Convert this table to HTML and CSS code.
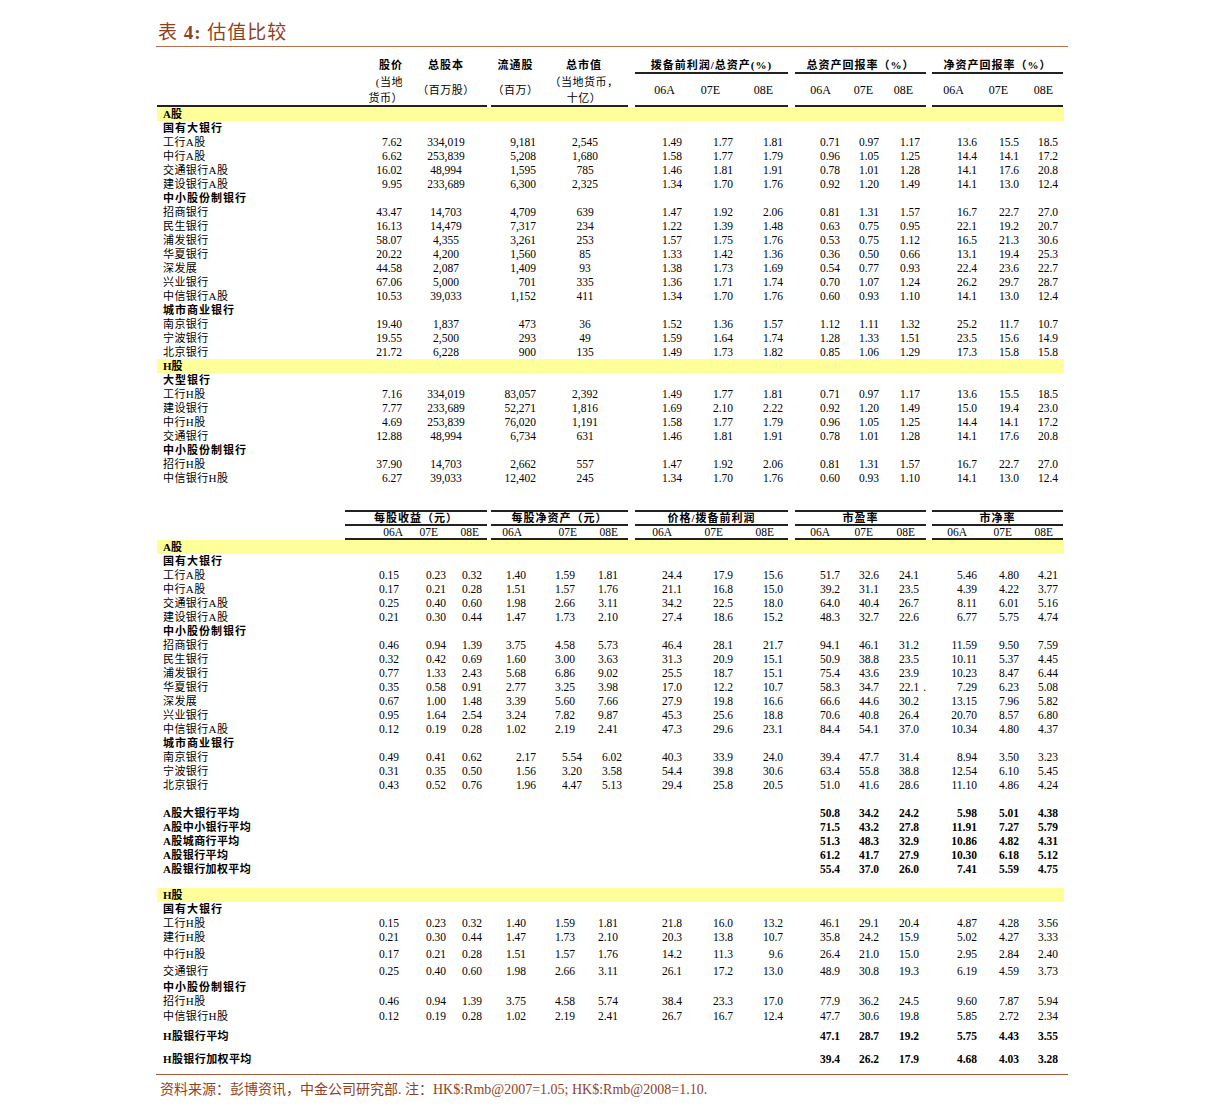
FILE: index.html
```html
<!DOCTYPE html>
<html lang="zh">
<head>
<meta charset="utf-8">
<title>表 4: 估值比较</title>
<link rel="stylesheet" href="styles.css">
</head>
<body>
<div class="page">
  <div class="title">表 <b>4:</b> 估值比较</div>
  <div class="tbl">
    <div class="hd1">
      <div class="seg s1 seg1a">
        <div class="hc hr">
          <div class="hl">股价</div>
          <div class="hs first">(当地</div>
          <div class="hs">货币）</div>
        </div>
        <div class="hc">
          <div class="hl">总股本</div>
          <div class="hm">（百万股）</div>
        </div>
      </div>
      <div class="seg s2 seg1b">
        <div class="hc">
          <div class="hl">流通股</div>
          <div class="hm">（百万）</div>
        </div>
        <div class="hc">
          <div class="hl">总市值</div>
          <div class="hs first">（当地货币，</div>
          <div class="hs">十亿）</div>
        </div>
      </div>
      <div class="seg s3">
        <div class="gt">拨备前利润/总资产(%)</div>
        <div class="sub p3"><span>06A</span><span>07E</span><span>08E</span></div>
      </div>
      <div class="seg s4">
        <div class="gt">总资产回报率（%）</div>
        <div class="sub p4"><span>06A</span><span>07E</span><span>08E</span></div>
      </div>
      <div class="seg s5">
        <div class="gt">净资产回报率（%）</div>
        <div class="sub p5"><span>06A</span><span>07E</span><span>08E</span></div>
      </div>
    </div>

    <div class="row band">A股</div>
    <div class="row grp">国有大银行</div>
    <div class="row t1"><span class="lb">工行A股</span><span>7.62</span><span>334,019</span><span>9,181</span><span>2,545</span><span>1.49</span><span>1.77</span><span>1.81</span><span>0.71</span><span>0.97</span><span>1.17</span><span>13.6</span><span>15.5</span><span>18.5</span></div>
    <div class="row t1"><span class="lb">中行A股</span><span>6.62</span><span>253,839</span><span>5,208</span><span>1,680</span><span>1.58</span><span>1.77</span><span>1.79</span><span>0.96</span><span>1.05</span><span>1.25</span><span>14.4</span><span>14.1</span><span>17.2</span></div>
    <div class="row t1"><span class="lb">交通银行A股</span><span>16.02</span><span>48,994</span><span>1,595</span><span>785</span><span>1.46</span><span>1.81</span><span>1.91</span><span>0.78</span><span>1.01</span><span>1.28</span><span>14.1</span><span>17.6</span><span>20.8</span></div>
    <div class="row t1"><span class="lb">建设银行A股</span><span>9.95</span><span>233,689</span><span>6,300</span><span>2,325</span><span>1.34</span><span>1.70</span><span>1.76</span><span>0.92</span><span>1.20</span><span>1.49</span><span>14.1</span><span>13.0</span><span>12.4</span></div>
    <div class="row grp">中小股份制银行</div>
    <div class="row t1"><span class="lb">招商银行</span><span>43.47</span><span>14,703</span><span>4,709</span><span>639</span><span>1.47</span><span>1.92</span><span>2.06</span><span>0.81</span><span>1.31</span><span>1.57</span><span>16.7</span><span>22.7</span><span>27.0</span></div>
    <div class="row t1"><span class="lb">民生银行</span><span>16.13</span><span>14,479</span><span>7,317</span><span>234</span><span>1.22</span><span>1.39</span><span>1.48</span><span>0.63</span><span>0.75</span><span>0.95</span><span>22.1</span><span>19.2</span><span>20.7</span></div>
    <div class="row t1"><span class="lb">浦发银行</span><span>58.07</span><span>4,355</span><span>3,261</span><span>253</span><span>1.57</span><span>1.75</span><span>1.76</span><span>0.53</span><span>0.75</span><span>1.12</span><span>16.5</span><span>21.3</span><span>30.6</span></div>
    <div class="row t1"><span class="lb">华夏银行</span><span>20.22</span><span>4,200</span><span>1,560</span><span>85</span><span>1.33</span><span>1.42</span><span>1.36</span><span>0.36</span><span>0.50</span><span>0.66</span><span>13.1</span><span>19.4</span><span>25.3</span></div>
    <div class="row t1"><span class="lb">深发展</span><span>44.58</span><span>2,087</span><span>1,409</span><span>93</span><span>1.38</span><span>1.73</span><span>1.69</span><span>0.54</span><span>0.77</span><span>0.93</span><span>22.4</span><span>23.6</span><span>22.7</span></div>
    <div class="row t1"><span class="lb">兴业银行</span><span>67.06</span><span>5,000</span><span>701</span><span>335</span><span>1.36</span><span>1.71</span><span>1.74</span><span>0.70</span><span>1.07</span><span>1.24</span><span>26.2</span><span>29.7</span><span>28.7</span></div>
    <div class="row t1"><span class="lb">中信银行A股</span><span>10.53</span><span>39,033</span><span>1,152</span><span>411</span><span>1.34</span><span>1.70</span><span>1.76</span><span>0.60</span><span>0.93</span><span>1.10</span><span>14.1</span><span>13.0</span><span>12.4</span></div>
    <div class="row grp">城市商业银行</div>
    <div class="row t1"><span class="lb">南京银行</span><span>19.40</span><span>1,837</span><span>473</span><span>36</span><span>1.52</span><span>1.36</span><span>1.57</span><span>1.12</span><span>1.11</span><span>1.32</span><span>25.2</span><span>11.7</span><span>10.7</span></div>
    <div class="row t1"><span class="lb">宁波银行</span><span>19.55</span><span>2,500</span><span>293</span><span>49</span><span>1.59</span><span>1.64</span><span>1.74</span><span>1.28</span><span>1.33</span><span>1.51</span><span>23.5</span><span>15.6</span><span>14.9</span></div>
    <div class="row t1"><span class="lb">北京银行</span><span>21.72</span><span>6,228</span><span>900</span><span>135</span><span>1.49</span><span>1.73</span><span>1.82</span><span>0.85</span><span>1.06</span><span>1.29</span><span>17.3</span><span>15.8</span><span>15.8</span></div>
    <div class="row band">H股</div>
    <div class="row grp">大型银行</div>
    <div class="row t1"><span class="lb">工行H股</span><span>7.16</span><span>334,019</span><span>83,057</span><span>2,392</span><span>1.49</span><span>1.77</span><span>1.81</span><span>0.71</span><span>0.97</span><span>1.17</span><span>13.6</span><span>15.5</span><span>18.5</span></div>
    <div class="row t1"><span class="lb">建设银行</span><span>7.77</span><span>233,689</span><span>52,271</span><span>1,816</span><span>1.69</span><span>2.10</span><span>2.22</span><span>0.92</span><span>1.20</span><span>1.49</span><span>15.0</span><span>19.4</span><span>23.0</span></div>
    <div class="row t1"><span class="lb">中行H股</span><span>4.69</span><span>253,839</span><span>76,020</span><span>1,191</span><span>1.58</span><span>1.77</span><span>1.79</span><span>0.96</span><span>1.05</span><span>1.25</span><span>14.4</span><span>14.1</span><span>17.2</span></div>
    <div class="row t1"><span class="lb">交通银行</span><span>12.88</span><span>48,994</span><span>6,734</span><span>631</span><span>1.46</span><span>1.81</span><span>1.91</span><span>0.78</span><span>1.01</span><span>1.28</span><span>14.1</span><span>17.6</span><span>20.8</span></div>
    <div class="row grp">中小股份制银行</div>
    <div class="row t1"><span class="lb">招行H股</span><span>37.90</span><span>14,703</span><span>2,662</span><span>557</span><span>1.47</span><span>1.92</span><span>2.06</span><span>0.81</span><span>1.31</span><span>1.57</span><span>16.7</span><span>22.7</span><span>27.0</span></div>
    <div class="row t1"><span class="lb">中信银行H股</span><span>6.27</span><span>39,033</span><span>12,402</span><span>245</span><span>1.34</span><span>1.70</span><span>1.76</span><span>0.60</span><span>0.93</span><span>1.10</span><span>14.1</span><span>13.0</span><span>12.4</span></div>

    <div class="hd2">
      <div class="seg2 c2">
        <div class="gt2">每股收益（元）</div>
        <div class="sub q1"><span>06A</span><span>07E</span><span>08E</span></div>
      </div>
      <div class="seg2 c4">
        <div class="gt2">每股净资产（元）</div>
        <div class="sub q2"><span>06A</span><span>07E</span><span>08E</span></div>
      </div>
      <div class="seg2 c6">
        <div class="gt2">价格/拨备前利润</div>
        <div class="sub q3"><span>06A</span><span>07E</span><span>08E</span></div>
      </div>
      <div class="seg2 c8">
        <div class="gt2">市盈率</div>
        <div class="sub q4"><span>06A</span><span>07E</span><span>08E</span></div>
      </div>
      <div class="seg2 c10">
        <div class="gt2">市净率</div>
        <div class="sub q5"><span>06A</span><span>07E</span><span>08E</span></div>
      </div>
    </div>

    <div class="row band">A股</div>
    <div class="row grp">国有大银行</div>
    <div class="row t2"><span class="lb">工行A股</span><span>0.15</span><span>0.23</span><span>0.32</span><span>1.40</span><span>1.59</span><span>1.81</span><span>24.4</span><span>17.9</span><span>15.6</span><span>51.7</span><span>32.6</span><span>24.1</span><span>5.46</span><span>4.80</span><span>4.21</span></div>
    <div class="row t2"><span class="lb">中行A股</span><span>0.17</span><span>0.21</span><span>0.28</span><span>1.51</span><span>1.57</span><span>1.76</span><span>21.1</span><span>16.8</span><span>15.0</span><span>39.2</span><span>31.1</span><span>23.5</span><span>4.39</span><span>4.22</span><span>3.77</span></div>
    <div class="row t2"><span class="lb">交通银行A股</span><span>0.25</span><span>0.40</span><span>0.60</span><span>1.98</span><span>2.66</span><span>3.11</span><span>34.2</span><span>22.5</span><span>18.0</span><span>64.0</span><span>40.4</span><span>26.7</span><span>8.11</span><span>6.01</span><span>5.16</span></div>
    <div class="row t2"><span class="lb">建设银行A股</span><span>0.21</span><span>0.30</span><span>0.44</span><span>1.47</span><span>1.73</span><span>2.10</span><span>27.4</span><span>18.6</span><span>15.2</span><span>48.3</span><span>32.7</span><span>22.6</span><span>6.77</span><span>5.75</span><span>4.74</span></div>
    <div class="row grp">中小股份制银行</div>
    <div class="row t2"><span class="lb">招商银行</span><span>0.46</span><span>0.94</span><span>1.39</span><span>3.75</span><span>4.58</span><span>5.73</span><span>46.4</span><span>28.1</span><span>21.7</span><span>94.1</span><span>46.1</span><span>31.2</span><span>11.59</span><span>9.50</span><span>7.59</span></div>
    <div class="row t2"><span class="lb">民生银行</span><span>0.32</span><span>0.42</span><span>0.69</span><span>1.60</span><span>3.00</span><span>3.63</span><span>31.3</span><span>20.9</span><span>15.1</span><span>50.9</span><span>38.8</span><span>23.5</span><span>10.11</span><span>5.37</span><span>4.45</span></div>
    <div class="row t2"><span class="lb">浦发银行</span><span>0.77</span><span>1.33</span><span>2.43</span><span>5.68</span><span>6.86</span><span>9.02</span><span>25.5</span><span>18.7</span><span>15.1</span><span>75.4</span><span>43.6</span><span>23.9</span><span>10.23</span><span>8.47</span><span>6.44</span></div>
    <div class="row t2"><span class="lb">华夏银行</span><span>0.35</span><span>0.58</span><span>0.91</span><span>2.77</span><span>3.25</span><span>3.98</span><span>17.0</span><span>12.2</span><span>10.7</span><span>58.3</span><span>34.7</span><span>22.1<span class="dot">.</span></span><span>7.29</span><span>6.23</span><span>5.08</span></div>
    <div class="row t2"><span class="lb">深发展</span><span>0.67</span><span>1.00</span><span>1.48</span><span>3.39</span><span>5.60</span><span>7.66</span><span>27.9</span><span>19.8</span><span>16.6</span><span>66.6</span><span>44.6</span><span>30.2</span><span>13.15</span><span>7.96</span><span>5.82</span></div>
    <div class="row t2"><span class="lb">兴业银行</span><span>0.95</span><span>1.64</span><span>2.54</span><span>3.24</span><span>7.82</span><span>9.87</span><span>45.3</span><span>25.6</span><span>18.8</span><span>70.6</span><span>40.8</span><span>26.4</span><span>20.70</span><span>8.57</span><span>6.80</span></div>
    <div class="row t2"><span class="lb">中信银行A股</span><span>0.12</span><span>0.19</span><span>0.28</span><span>1.02</span><span>2.19</span><span>2.41</span><span>47.3</span><span>29.6</span><span>23.1</span><span>84.4</span><span>54.1</span><span>37.0</span><span>10.34</span><span>4.80</span><span>4.37</span></div>
    <div class="row grp">城市商业银行</div>
    <div class="row t2"><span class="lb">南京银行</span><span>0.49</span><span>0.41</span><span>0.62</span><span class="sh10">2.17</span><span class="sh7">5.54</span><span class="sh4">6.02</span><span>40.3</span><span>33.9</span><span>24.0</span><span>39.4</span><span>47.7</span><span>31.4</span><span>8.94</span><span>3.50</span><span>3.23</span></div>
    <div class="row t2"><span class="lb">宁波银行</span><span>0.31</span><span>0.35</span><span>0.50</span><span class="sh10">1.56</span><span class="sh7">3.20</span><span class="sh4">3.58</span><span>54.4</span><span>39.8</span><span>30.6</span><span>63.4</span><span>55.8</span><span>38.8</span><span>12.54</span><span>6.10</span><span>5.45</span></div>
    <div class="row t2"><span class="lb">北京银行</span><span>0.43</span><span>0.52</span><span>0.76</span><span class="sh10">1.96</span><span class="sh7">4.47</span><span class="sh4">5.13</span><span>29.4</span><span>25.8</span><span>20.5</span><span>51.0</span><span>41.6</span><span>28.6</span><span>11.10</span><span>4.86</span><span>4.24</span></div>
    <div class="row"></div>
    <div class="row t2 avg"><span class="lb">A股大银行平均</span><span class="pe">50.8</span><span>34.2</span><span>24.2</span><span>5.98</span><span>5.01</span><span>4.38</span></div>
    <div class="row t2 avg"><span class="lb">A股中小银行平均</span><span class="pe">71.5</span><span>43.2</span><span>27.8</span><span>11.91</span><span>7.27</span><span>5.79</span></div>
    <div class="row t2 avg"><span class="lb">A股城商行平均</span><span class="pe">51.3</span><span>48.3</span><span>32.9</span><span>10.86</span><span>4.82</span><span>4.31</span></div>
    <div class="row t2 avg"><span class="lb">A股银行平均</span><span class="pe">61.2</span><span>41.7</span><span>27.9</span><span>10.30</span><span>6.18</span><span>5.12</span></div>
    <div class="row t2 avg"><span class="lb">A股银行加权平均</span><span class="pe">55.4</span><span>37.0</span><span>26.0</span><span>7.41</span><span>5.59</span><span>4.75</span></div>

    <div class="row band m12">H股</div>
    <div class="row grp">国有大银行</div>
    <div class="row t2"><span class="lb">工行H股</span><span>0.15</span><span>0.23</span><span>0.32</span><span>1.40</span><span>1.59</span><span>1.81</span><span>21.8</span><span>16.0</span><span>13.2</span><span>46.1</span><span>29.1</span><span>20.4</span><span>4.87</span><span>4.28</span><span>3.56</span></div>
    <div class="row t2"><span class="lb">建行H股</span><span>0.21</span><span>0.30</span><span>0.44</span><span>1.47</span><span>1.73</span><span>2.10</span><span>20.3</span><span>13.8</span><span>10.7</span><span>35.8</span><span>24.2</span><span>15.9</span><span>5.02</span><span>4.27</span><span>3.33</span></div>
    <div class="row t2 m3"><span class="lb">中行H股</span><span>0.17</span><span>0.21</span><span>0.28</span><span>1.51</span><span>1.57</span><span>1.76</span><span>14.2</span><span>11.3</span><span>9.6</span><span>26.4</span><span>21.0</span><span>15.0</span><span>2.95</span><span>2.84</span><span>2.40</span></div>
    <div class="row t2 m3"><span class="lb">交通银行</span><span>0.25</span><span>0.40</span><span>0.60</span><span>1.98</span><span>2.66</span><span>3.11</span><span>26.1</span><span>17.2</span><span>13.0</span><span>48.9</span><span>30.8</span><span>19.3</span><span>6.19</span><span>4.59</span><span>3.73</span></div>
    <div class="row grp m2">中小股份制银行</div>
    <div class="row t2"><span class="lb">招行H股</span><span>0.46</span><span>0.94</span><span>1.39</span><span>3.75</span><span>4.58</span><span>5.74</span><span>38.4</span><span>23.3</span><span>17.0</span><span>77.9</span><span>36.2</span><span>24.5</span><span>9.60</span><span>7.87</span><span>5.94</span></div>
    <div class="row t2 m1"><span class="lb">中信银行H股</span><span>0.12</span><span>0.19</span><span>0.28</span><span>1.02</span><span>2.19</span><span>2.41</span><span>26.7</span><span>16.7</span><span>12.4</span><span>47.7</span><span>30.6</span><span>19.8</span><span>5.85</span><span>2.72</span><span>2.34</span></div>
    <div class="row t2 avg m6"><span class="lb">H股银行平均</span><span class="pe">47.1</span><span>28.7</span><span>19.2</span><span>5.75</span><span>4.43</span><span>3.55</span></div>
    <div class="row t2 avg m9"><span class="lb">H股银行加权平均</span><span class="pe">39.4</span><span>26.2</span><span>17.9</span><span>4.68</span><span>4.03</span><span>3.28</span></div>
  </div>
  <div class="foot">资料来源：彭博资讯，中金公司研究部. 注：HK$:Rmb@2007=1.05; HK$:Rmb@2008=1.10.</div>
</div>
</body>
</html>
```

FILE: styles.css
```css
* {
  box-sizing: border-box;
  margin: 0;
  padding: 0;
}

body {
  margin: 0;
  background: #ffffff;
  color: #000000;
  font-family: "Liberation Serif", "Noto Sans CJK SC", serif;
}

.page {
  width: 912px;
  margin-left: 156px;
}

.title {
  height: 47px;
  padding: 21px 0 0 2px;
  line-height: 24px;
  font-size: 19px;
  letter-spacing: 1px;
  color: #923f1d;
  border-bottom: 1px solid #b5704f;
}

.title b {
  font-weight: bold;
}

.tbl {
  width: 907px;
  margin-left: 1px;
}

/* ---------- header of first table ---------- */
.hd1 {
  display: grid;
  grid-template-columns: 330px 4px 137px 7px 153px 7px 131px 6px 131px;
}

.seg {
  height: 58px;
  box-sizing: content-box;
  border-bottom: 2px solid #222;
}

.s1 { grid-column: 1; }
.s2 { grid-column: 3; }
.s3 { grid-column: 5; }
.s4 { grid-column: 7; }
.s5 { grid-column: 9; }

.seg1a {
  display: grid;
  grid-template-columns: 248px 82px;
}

.seg1b {
  display: grid;
  grid-template-columns: 49px 88px;
}

.hc {
  text-align: center;
  font-size: 11px;
  white-space: nowrap;
}

.hr {
  text-align: right;
  padding-right: 2px;
}

.hl {
  padding-top: 11px;
  line-height: 14px;
  font-weight: bold;
  letter-spacing: 1px;
}

.hs {
  line-height: 16px;
  letter-spacing: 0.5px;
}

.hs.first {
  margin-top: 2px;
}

.hm {
  margin-top: 11px;
  line-height: 14px;
  letter-spacing: 0.5px;
}

.gt {
  padding-top: 11px;
  line-height: 14px;
  text-align: center;
  font-size: 11px;
  font-weight: bold;
  letter-spacing: 1px;
  white-space: nowrap;
  border-bottom: 2px solid #222;
}

.sub {
  display: grid;
  text-align: right;
  font-size: 11.5px;
  white-space: nowrap;
}

.hd1 .sub {
  padding-top: 9px;
  line-height: 14px;
  font-size: 12px;
}

.p3 { grid-template-columns: 40px 45px 53px 1fr; }
.p4 { grid-template-columns: 36px 42px 40px 1fr; }
.p5 { grid-template-columns: 32px 44px 45px 1fr; }

/* ---------- header of second table ---------- */
.hd2 {
  display: grid;
  grid-template-columns: 188px 142px 4px 137px 7px 153px 7px 131px 6px 131px;
  margin-top: 25px;
}

.seg2 {
  border-top: 2px solid #222;
  border-bottom: 2px solid #222;
}

.c2 { grid-column: 2; }
.c4 { grid-column: 4; }
.c6 { grid-column: 6; }
.c8 { grid-column: 8; }
.c10 { grid-column: 10; }

.gt2 {
  line-height: 12px;
  height: 14px;
  text-align: center;
  font-size: 11px;
  font-weight: bold;
  letter-spacing: 1px;
  white-space: nowrap;
  border-bottom: 2px solid #222;
}

.hd2 .sub {
  line-height: 12px;
  height: 12px;
}

.q1 { grid-template-columns: 58px 35px 41px 1fr; }
.q2 { grid-template-columns: 31px 55px 41px 1fr; }
.q3 { grid-template-columns: 37px 51px 51px 1fr; }
.q4 { grid-template-columns: 35px 43px 42px 1fr; }
.q5 { grid-template-columns: 35px 45px 41px 1fr; }

/* ---------- data rows ---------- */
.row {
  display: grid;
  height: 14px;
  line-height: 14px;
  font-size: 11.5px;
  white-space: nowrap;
}

.t1 {
  grid-template-columns: 203px 42px 88px 46px 98px 48px 51px 50px 57px 39px 41px 57px 42px 39px 6px;
}

.t2 {
  grid-template-columns: 203px 39px 47px 36px 44px 49px 43px 64px 51px 50px 57px 39px 40px 58px 42px 39px 6px;
}

.row > span {
  text-align: right;
}

.row > span.lb {
  text-align: left;
  padding-left: 6px;
  font-size: 11px;
  letter-spacing: 0.4px;
}

.t1 > span:nth-child(3),
.t1 > span:nth-child(5) {
  text-align: center;
}

.band {
  background: #ffff99;
  font-weight: bold;
  font-size: 11px;
  padding-left: 6px;
}

.grp {
  font-weight: bold;
  font-size: 11px;
  padding-left: 6px;
  letter-spacing: 1px;
}

.avg {
  font-weight: bold;
}

.avg .lb {
  letter-spacing: 1px;
}

.avg .pe {
  grid-column: 11;
}

.sh10 { margin-right: -10px; }
.sh7 { margin-right: -7px; }
.sh4 { margin-right: -4px; }

.dot {
  padding-left: 4px;
  margin-right: -7px;
}

.m1 { margin-top: 1px; }
.m2 { margin-top: 2px; }
.m3 { margin-top: 3px; }
.m6 { margin-top: 6px; }
.m9 { margin-top: 9px; }
.m12 { margin-top: 12px; }

/* ---------- footer ---------- */
.foot {
  margin-top: 8px;
  border-top: 1px solid #a65c3c;
  padding: 5px 0 0 4px;
  font-size: 14px;
  line-height: 20px;
  color: #923f1d;
  white-space: nowrap;
}
```
